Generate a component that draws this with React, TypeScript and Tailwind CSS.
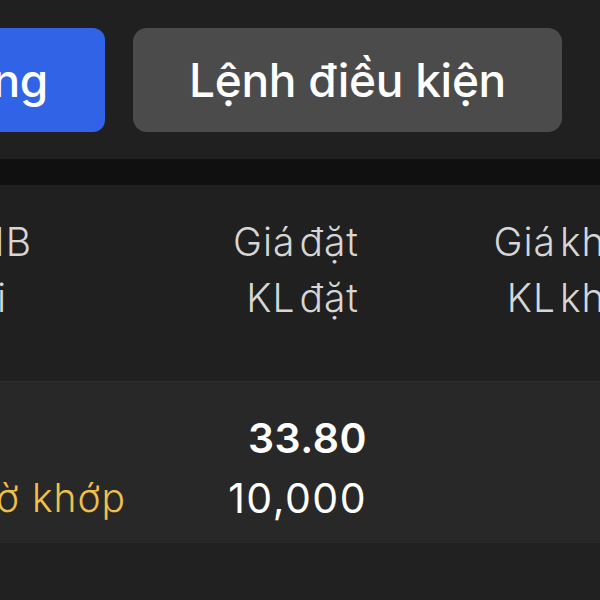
export default function App() {
    return (
        <div className="w-[600px] h-[600px] overflow-hidden bg-[#212121] font-['Inter','Noto_Sans',sans-serif]">
            {/* tabs */}
            <div className="h-[159px] bg-[#202020] pt-[28px] flex gap-[28px]">
                <div className="shrink-0 ml-[-235px] w-[340px] h-[104px] rounded-[12px] bg-[#3163e6] flex items-center justify-end pr-[57px] text-white text-[46px] font-medium tracking-[-0.3px] whitespace-nowrap overflow-hidden">
                    Lệnh thường
                </div>
                <div className="shrink-0 w-[429px] h-[104px] rounded-[14px] bg-[#4b4b4b] flex items-center justify-center text-white text-[46px] font-medium tracking-[-0.3px] whitespace-nowrap">
                    Lệnh điều kiện
                </div>
            </div>
            <div className="h-[26px] bg-[#101010]" />

            {/* table header */}
            <div className="h-[196px] bg-[#202020] pt-[29px] text-[39px] font-light text-[#d6d6d6] leading-[56px] tracking-[1px] [word-spacing:-8px] whitespace-nowrap">
                <div className="flex">
                    <div className="shrink-0 w-[32px] flex flex-col items-end overflow-hidden">
                        <span>Lệnh MB</span>
                        <span className="pr-[25px]">Trạng thái</span>
                    </div>
                    <div className="shrink-0 w-[327px] flex flex-col items-end">
                        <span>Giá đặt</span>
                        <span>KL đặt</span>
                    </div>
                    <div className="shrink-0 w-[295px] flex flex-col items-end">
                        <span>Giá khớp</span>
                        <span>KL khớp</span>
                    </div>
                </div>
            </div>

            {/* order row */}
            <div className="h-[162px] bg-[#282828] border-t border-[#2c2c2c] pt-[26px] leading-[60px] text-[41px] text-white whitespace-nowrap">
                <div className="flex">
                    <div className="shrink-0 w-[126px] flex flex-col items-end overflow-hidden">
                        <span>&nbsp;</span>
                        <span className="text-[#efc04c] text-[39px] font-light tracking-[1px]">Chờ khớp</span>
                    </div>
                    <div className="shrink-0 w-[241px] flex flex-col items-end">
                        <span className="font-semibold tracking-[0.5px]">33.80</span>
                        <span className="tracking-[1.5px]">10,000</span>
                    </div>
                </div>
            </div>
        </div>
    );
}
